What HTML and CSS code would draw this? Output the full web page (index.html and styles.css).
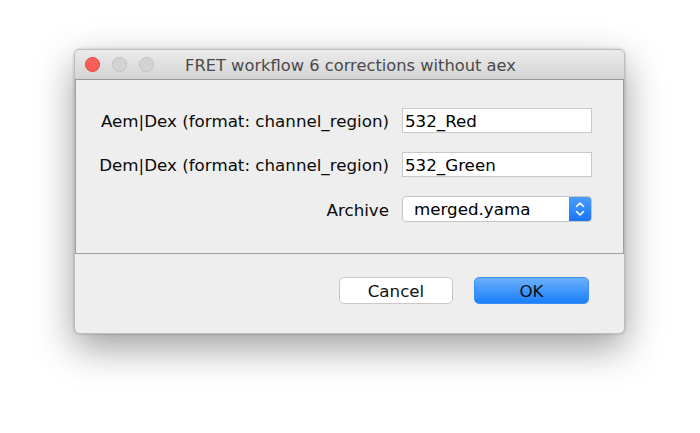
FILE: index.html
```html
<!DOCTYPE html>
<html>
<head>
<meta charset="utf-8">
<link rel="stylesheet" href="styles.css">
</head>
<body>
<div class="window">
  <div class="titlebar">
    <div class="lights">
      <span class="light red"></span>
      <span class="light grey"></span>
      <span class="light grey"></span>
    </div>
    <div class="title">FRET workflow 6 corrections without aex</div>
  </div>
  <div class="panel">
    <div class="form">
      <label class="label">Aem|Dex (format: channel_region)</label>
      <div class="field">532_Red</div>
      <label class="label">Dem|Dex (format: channel_region)</label>
      <div class="field">532_Green</div>
      <label class="label">Archive</label>
      <div class="select">
        <span class="select-text">merged.yama</span>
        <span class="select-arrows">
          <svg width="12" height="18" viewBox="0 0 12 18">
            <path d="M2.5 6.5 L6 3 L9.5 6.5" fill="none" stroke="#fff" stroke-width="1.6" stroke-linecap="round" stroke-linejoin="round"/>
            <path d="M2.5 11.5 L6 15 L9.5 11.5" fill="none" stroke="#fff" stroke-width="1.6" stroke-linecap="round" stroke-linejoin="round"/>
          </svg>
        </span>
      </div>
    </div>
  </div>
  <div class="buttons">
    <button class="btn cancel">Cancel</button>
    <button class="btn ok">OK</button>
  </div>
</div>
</body>
</html>
```
FILE: styles.css
```css
html, body {
  margin: 0;
  padding: 0;
  background: #ffffff;
}
body {
  width: 700px;
  height: 433px;
  padding: 49px 0 0 74px;
  box-sizing: border-box;
  font-family: "DejaVu Sans", "Liberation Sans", sans-serif;
}
.window {
  width: 551px;
  height: 285px;
  box-sizing: border-box;
  background: #eeeeee;
  border: 1px solid #bdbdbd;
  border-radius: 6px;
  box-shadow: 0 14px 38px rgba(0, 0, 0, 0.38), 0 0 3px rgba(0, 0, 0, 0.22);
  display: flex;
  flex-direction: column;
  overflow: hidden;
}
.titlebar {
  position: relative;
  height: 29px;
  flex: none;
  background: linear-gradient(#ebebeb, #d4d4d4);
  border-bottom: 1px solid #999999;
  display: flex;
  align-items: center;
  justify-content: center;
}
.lights {
  position: absolute;
  left: 10px;
  top: 7px;
  display: flex;
  gap: 12px;
}
.light {
  width: 15px;
  height: 15px;
  border-radius: 50%;
  box-sizing: border-box;
}
.light.red {
  background: #fc5f57;
  border: 1px solid #e0443e;
}
.light.grey {
  background: #d3d3d3;
  border: 1px solid #c2c2c2;
}
.title {
  font-size: 16.3px;
  color: #4a4a4a;
  margin-left: 2px;
  margin-top: 1px;
}
.panel {
  flex: none;
  height: 174px;
  box-sizing: border-box;
  border: 1px solid #9e9e9e;
  border-top: none;
  background: #eeeeee;
  padding: 28px 31px 0 0;
}
.form {
  display: grid;
  grid-template-columns: auto 190px;
  justify-content: end;
  column-gap: 13px;
  row-gap: 19px;
  align-items: center;
}
.label {
  font-size: 16.7px;
  color: #0a0a0a;
  text-align: right;
  white-space: nowrap;
  padding-top: 1px;
}
.field {
  height: 25px;
  box-sizing: border-box;
  background: #fff;
  border: 1px solid #c9c9c9;
  font-size: 16.7px;
  color: #000;
  padding-left: 2px;
  line-height: 24px;
}
.select {
  height: 26px;
  box-sizing: border-box;
  background: #fff;
  border: 1px solid #c6c6c6;
  border-radius: 4px;
  display: flex;
  overflow: hidden;
}
.select-text {
  flex: 1;
  font-size: 16.7px;
  line-height: 24px;
  color: #000;
  padding-left: 11px;
}
.select-arrows {
  width: 22px;
  background: linear-gradient(#4a9dfb, #1a74f5);
  display: flex;
  align-items: center;
  justify-content: center;
}
.buttons {
  flex: 1;
  display: flex;
  justify-content: flex-end;
  gap: 21px;
  padding: 23px 35px 0 0;
}
.btn {
  width: 114px;
  height: 27px;
  box-sizing: border-box;
  font-family: "DejaVu Sans", "Liberation Sans", sans-serif;
  font-size: 16.7px;
  color: #111;
  border-radius: 5px;
  padding: 0;
}
.cancel {
  background: #ffffff;
  border: 1px solid #c8c8c8;
}
.ok {
  width: 115px;
  background: linear-gradient(#6bb0fb, #1a7ffa);
  border: 1px solid #3b8ef4;
}
```
